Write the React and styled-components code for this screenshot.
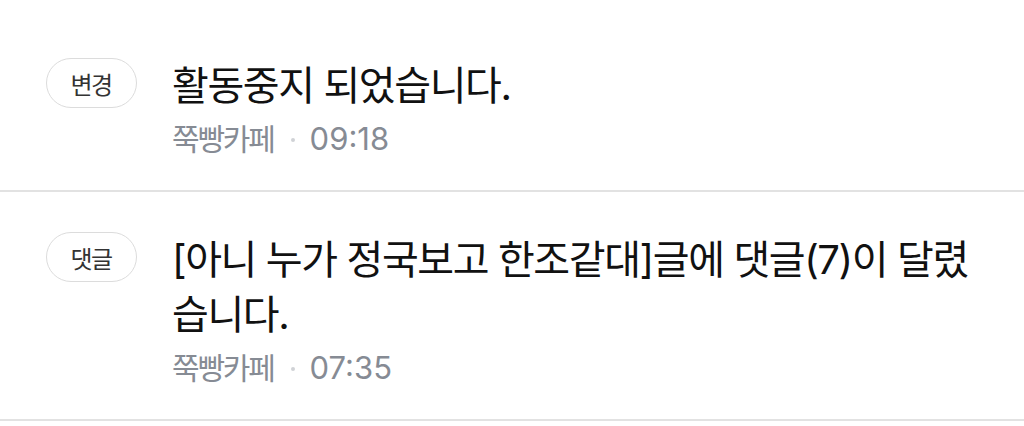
import React from "react";
import styled, { createGlobalStyle } from "styled-components";

const Global = createGlobalStyle`
  html, body { margin: 0; padding: 0; background: #fff; }
  body { font-family: Inter, "Noto Sans CJK KR", "Noto Sans", sans-serif; -webkit-font-smoothing: antialiased; }
`;

const List = styled.ul`
  list-style: none;
  margin: 0;
  padding: 18px 0 0;
  width: 1024px;
`;

const Row = styled.li`
  display: flex;
  align-items: flex-start;
  gap: 35px;
  padding: 40px 40px 33px 46px;
  border-bottom: 2px solid #e2e2e2;
`;

const Badge = styled.span`
  flex: none;
  box-sizing: border-box;
  width: 91px;
  height: 50px;
  border: 1.5px solid #dcdcdc;
  border-radius: 25px;
  display: flex;
  align-items: center;
  justify-content: center;
  font-size: 24px;
  letter-spacing: -1.5px;
  padding-right: 1px;
  color: #333;
`;

const Body = styled.div`
  flex: 1;
  min-width: 0;
  max-width: 830px;
`;

const Title = styled.p`
  margin: 0;
  font-size: 40px;
  line-height: 55px;
  letter-spacing: -1.4px;
  color: #111;
`;

const Meta = styled.div`
  display: flex;
  align-items: center;
  margin-top: 8px;
  line-height: 36px;
  color: #868b94;
`;

const Cafe = styled.span`
  font-size: 30px;
  letter-spacing: -2.2px;
`;

const Time = styled.span`
  font-size: 31px;
`;

const Dot = styled.span`
  width: 4px;
  height: 4px;
  border-radius: 50%;
  background: #d0d2d6;
  margin: 2px 15px 0 17px;
`;

const items = [
  { badge: "변경", title: "활동중지 되었습니다.", cafe: "쭉빵카페", time: "09:18" },
  { badge: "댓글", title: "[아니 누가 정국보고 한조같대]글에 댓글(7)이 달렸습니다.", cafe: "쭉빵카페", time: "07:35" },
];

export default function App() {
  return (
    <>
      <Global />
      <List>
        {items.map((it, i) => (
          <Row key={i}>
            <Badge>{it.badge}</Badge>
            <Body>
              <Title>{it.title}</Title>
              <Meta>
                <Cafe>{it.cafe}</Cafe>
                <Dot />
                <Time>{it.time}</Time>
              </Meta>
            </Body>
          </Row>
        ))}
      </List>
    </>
  );
}
